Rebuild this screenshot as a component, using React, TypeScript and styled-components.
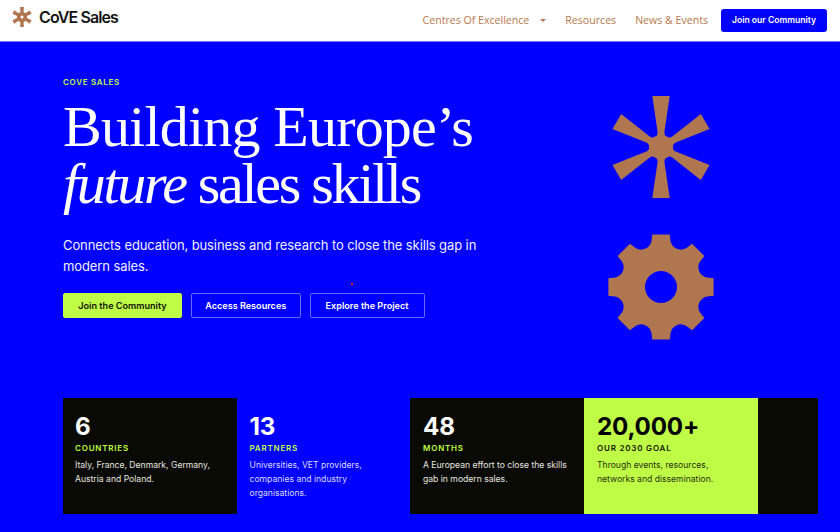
import React from "react";
import styled, { createGlobalStyle } from "styled-components";

const GlobalStyle = createGlobalStyle`
  html, body {
    margin: 0;
    padding: 0;
    background: #0000ff;
  }
  * {
    box-sizing: border-box;
  }
`;

const Page = styled.div`
  width: 840px;
  height: 532px;
  overflow: hidden;
  font-family: "Inter", "Liberation Sans", sans-serif;
`;

const Header = styled.header`
  height: 42px;
  display: flex;
  align-items: center;
  justify-content: space-between;
  padding: 0 13px 1px 12px;
  background: #fff;
  border-bottom: 1px solid #7a7af0;
`;

const Brand = styled.div`
  display: flex;
  align-items: center;
  gap: 7px;
  margin-top: -6px;
`;

const BrandName = styled.span`
  font-size: 16px;
  font-weight: 600;
  letter-spacing: -0.9px;
  color: #141414;
`;

const Nav = styled.nav`
  display: flex;
  align-items: center;
`;

const NavLink = styled.a`
  display: flex;
  align-items: center;
  font-family: "Open Sans", "Liberation Sans", sans-serif;
  font-size: 10.6px;
  color: #b8784f;
  margin-right: 19px;
`;

const Caret = styled.span`
  width: 0;
  height: 0;
  margin-left: 11px;
  border-left: 3.5px solid transparent;
  border-right: 3.5px solid transparent;
  border-top: 3.5px solid #b8784f;
`;

const JoinButton = styled.a`
  height: 23px;
  width: 106px;
  margin-left: -6px;
  display: flex;
  align-items: center;
  justify-content: center;
  border-radius: 3px;
  background: #0000ff;
  color: #fff;
  font-size: 8.6px;
  font-weight: 600;
`;

const Hero = styled.section`
  position: relative;
  height: 356px;
  padding: 35px 0 0 63px;
  display: flex;
  justify-content: space-between;
`;

const HeroCopy = styled.div`
  width: 450px;
`;

const Eyebrow = styled.div`
  font-size: 8px;
  font-weight: 600;
  letter-spacing: 0.7px;
  color: #bffc45;
`;

const Title = styled.h1`
  margin: 11px 0 0;
  font-family: "Liberation Serif", serif;
  font-size: 58px;
  line-height: 57px;
  font-weight: 400;
  color: #fff;
  white-space: nowrap;

  em {
    font-style: italic;
  }
`;

const TitleLine = styled.span<{ $tracking: number }>`
  display: block;
  letter-spacing: ${(p) => p.$tracking}px;
`;

const Lead = styled.p`
  margin: 23px 0 0;
  width: 430px;
  font-size: 13px;
  line-height: 21px;
  letter-spacing: -0.1px;
  color: #f0f0ff;
`;

const Actions = styled.div`
  display: flex;
  gap: 8.5px;
  margin-top: 16px;
`;

const ActionButton = styled.a<{ $primary?: boolean; $width: number }>`
  width: ${(p) => p.$width}px;
  height: 25px;
  display: flex;
  align-items: center;
  justify-content: center;
  border-radius: 2px;
  font-size: 9.1px;
  font-weight: 600;
  color: ${(p) => (p.$primary ? "#10120a" : "#fff")};
  background: ${(p) => (p.$primary ? "#bffc45" : "transparent")};
  border: 1px solid ${(p) => (p.$primary ? "#bffc45" : "#6a6aff")};
`;

const Marks = styled.div`
  width: 106px;
  margin-right: 125.7px;
  display: flex;
  flex-direction: column;
  align-items: center;
  gap: 35.3px;
  padding-top: 18px;
`;

const RedDot = styled.span`
  position: absolute;
  left: 351px;
  top: 241px;
  width: 2px;
  height: 2px;
  background: #f01018;
`;

const Stats = styled.section`
  margin-left: 63px;
  width: 755px;
  height: 116px;
  display: grid;
  grid-template-columns: 173.5px 173.5px 174px 174px 60px;
`;

const Stat = styled.div<{ $tone: "dark" | "blue" | "lime" }>`
  padding: 14px 0 0 13px;
  background: ${(p) =>
    p.$tone === "dark" ? "#0a0a05" : p.$tone === "lime" ? "#bffc45" : "transparent"};
  color: ${(p) => (p.$tone === "lime" ? "#000" : "#fff")};

  &:first-child {
    padding-left: 12px;
  }
`;

const StatValue = styled.div`
  font-size: 24.2px;
  line-height: 30px;
  font-weight: 700;
  letter-spacing: -0.2px;
`;

const StatLabel = styled.div<{ $lime?: boolean }>`
  font-size: 8px;
  line-height: 12px;
  font-weight: 600;
  letter-spacing: 0.8px;
  color: ${(p) => (p.$lime ? "#14140a" : "#bffc45")};
`;

const StatText = styled.p<{ $tone: "dark" | "blue" | "lime" }>`
  margin: 4px 0 0;
  font-size: 8.6px;
  line-height: 14px;
  white-space: nowrap;
  color: ${(p) =>
    p.$tone === "lime" ? "#2a3014" : p.$tone === "blue" ? "#dcdcff" : "#e6e6e0"};
`;

const Filler = styled.div`
  background: #0a0a05;
`;

const COPPER = "#b07650";

const rotate = (x: number, y: number, deg: number) => {
  const r = (deg * Math.PI) / 180;
  return [x * Math.cos(r) - y * Math.sin(r), x * Math.sin(r) + y * Math.cos(r)]
    .map((v) => v.toFixed(2))
    .join(" ");
};

// six tapered arms, with a rounded notch between each pair
const asteriskPath = (() => {
  let d = "";
  for (let i = 0; i < 6; i++) {
    const a = i * 60;
    d += `${i === 0 ? "M" : "L"}${rotate(-8.7, -51, a)} L${rotate(8.7, -51, a)} L${rotate(3.4, -15, a)} `;
    d += `Q${rotate(3.2, -11.5, a)} ${rotate(6, -10.4, a)} `;
    d += `Q${rotate(-3.2, -11.5, a + 60)} ${rotate(-3.4, -15, a + 60)} `;
  }
  return d + "Z";
})();

const gearPath = (() => {
  let d = "";
  for (let i = 0; i < 8; i++) {
    const a = i * 45;
    d += `${i === 0 ? "M" : "L"}${rotate(-8.7, -52.6, a)} L${rotate(8.7, -52.6, a)} L${rotate(9.5, -46, a)} `;
    d += `A10.5 10.5 0 0 0 ${rotate(-9.5, -46, a + 45)} `;
  }
  // hole, drawn as two arcs so evenodd cuts it out
  return d + "Z M-16 0 A16 16 0 1 0 16 0 A16 16 0 1 0 -16 0 Z";
})();

const Asterisk = () => (
  <svg width="100" height="104" viewBox="-50 -52 100 104">
    <path d={asteriskPath} fill={COPPER} />
  </svg>
);

const Gear = () => (
  <svg width="106" height="106" viewBox="-53 -53 106 106">
    <path d={gearPath} fill={COPPER} fillRule="evenodd" />
  </svg>
);

const LogoMark = () => (
  <svg width="20" height="20" viewBox="-10 -10 20 20" fill={COPPER}>
    {[0, 60, 120, 180, 240, 300].map((a) => (
      <path key={a} d="M-1.9 -10 L1.9 -10 L1.4 -3 L-1.4 -3 Z" transform={`rotate(${a})`} />
    ))}
    <path
      fillRule="evenodd"
      d="M-5.2 0 A5.2 5.2 0 1 0 5.2 0 A5.2 5.2 0 1 0 -5.2 0 Z M-1.5 0 A1.5 1.5 0 1 0 1.5 0 A1.5 1.5 0 1 0 -1.5 0 Z"
    />
  </svg>
);

const stats = [
  { value: "6", label: "COUNTRIES", text: ["Italy, France, Denmark, Germany,", "Austria and Poland."], tone: "dark" },
  { value: "13", label: "PARTNERS", text: ["Universities, VET providers,", "companies and industry", "organisations."], tone: "blue" },
  { value: "48", label: "MONTHS", text: ["A European effort to close the skills", "gab in modern sales."], tone: "dark" },
  { value: "20,000+", label: "OUR 2030 GOAL", text: ["Through events, resources,", "networks and dissemination."], tone: "lime" },
] as const;

const App = () => {
  return (
    <Page>
      <GlobalStyle />
      <Header>
        <Brand>
          <LogoMark />
          <BrandName>CoVE Sales</BrandName>
        </Brand>
        <Nav>
          <NavLink>
            Centres Of Excellence
            <Caret />
          </NavLink>
          <NavLink>Resources</NavLink>
          <NavLink>News &amp; Events</NavLink>
          <JoinButton>Join our Community</JoinButton>
        </Nav>
      </Header>
      <Hero>
        <HeroCopy>
          <Eyebrow>COVE SALES</Eyebrow>
          <Title>
            <TitleLine $tracking={-0.8}>Building Europe’s</TitleLine>
            <TitleLine $tracking={-2.3}>
              <em>future</em> sales skills
            </TitleLine>
          </Title>
          <Lead>Connects education, business and research to close the skills gap in modern sales.</Lead>
          <Actions>
            <ActionButton $primary $width={119}>Join the Community</ActionButton>
            <ActionButton $width={110.5}>Access Resources</ActionButton>
            <ActionButton $width={115}>Explore the Project</ActionButton>
          </Actions>
        </HeroCopy>
        <Marks>
          <Asterisk />
          <Gear />
        </Marks>
        <RedDot />
      </Hero>
      <Stats>
        {stats.map((s) => (
          <Stat key={s.label} $tone={s.tone}>
            <StatValue>{s.value}</StatValue>
            <StatLabel $lime={s.tone === "lime"}>{s.label}</StatLabel>
            <StatText $tone={s.tone}>
              {s.text.map((line) => (
                <React.Fragment key={line}>
                  {line}
                  <br />
                </React.Fragment>
              ))}
            </StatText>
          </Stat>
        ))}
        <Filler />
      </Stats>
    </Page>
  );
};

export default App;
